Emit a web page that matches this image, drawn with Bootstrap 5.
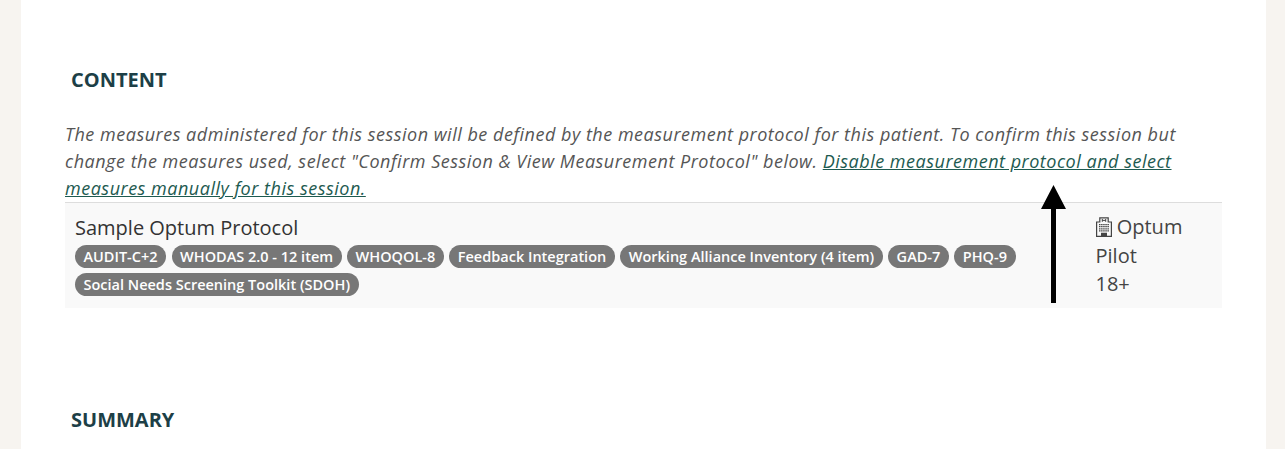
<!DOCTYPE html>
<html lang="en"><head><meta charset="utf-8">
<link href="https://cdn.jsdelivr.net/npm/bootstrap@5.3.0/dist/css/bootstrap.min.css" rel="stylesheet">
<style>
html,body{height:449px;overflow:hidden}
body{background:#f7f4f0;font-family:"Open Sans",sans-serif;color:#333}
.sheet{margin:0 19px 0 21px;height:449px;background:#fff;padding:69px 44px 0 44px;position:relative}
.sect{font-size:20px;font-weight:700;color:#1d3f47;line-height:22px;margin:0 0 0 6px}
.intro{font-size:18px;font-style:italic;line-height:27px;color:#555;margin:30px 0 0;width:1125px;letter-spacing:.51px}
.intro a{color:#1d5a50}
.proto{background:#f9f9f9;border-top:1px solid #ddd;height:105.5px;margin-top:0}
.pmain{width:1031px;padding:10px 0 0 10px}
.pname{font-size:20px;line-height:30px;color:#333}
.chips{gap:5px 5.5px;margin-top:2px;width:990px}
.chip{background:#777;color:#fff;font-size:14.5px;font-weight:600;line-height:19px;height:23px;padding:2px 8.5px;border-radius:12px;white-space:nowrap}
.pside{font-size:20px;line-height:28.5px;padding-top:10px;color:#444;margin-left:-.5px}
.pside svg{vertical-align:-3px}
.sect2{margin-top:101.5px}
.arrow{position:absolute;left:1020px;top:185px}
</style></head><body>
<div class="sheet">
<h2 class="sect">CONTENT</h2>
<p class="intro">The measures administered for this session will be defined by the measurement protocol for this patient. To confirm this session but change the measures used, select "Confirm Session &amp; View Measurement Protocol" below. <a href="#">Disable measurement protocol and select measures manually for this session.</a></p>
<div class="proto d-flex">
<div class="pmain">
<div class="pname">Sample Optum Protocol</div>
<div class="chips d-flex flex-wrap">
<span class="chip">AUDIT-C+2</span><span class="chip">WHODAS 2.0 - 12 item</span><span class="chip">WHOQOL-8</span><span class="chip">Feedback Integration</span><span class="chip">Working Alliance Inventory (4 item)</span><span class="chip">GAD-7</span><span class="chip">PHQ-9</span><span class="chip">Social Needs Screening Toolkit (SDOH)</span>
</div></div>
<div class="pside">
<div><svg width="16" height="20" viewBox="0 0 16 20" fill="none" stroke="#444" stroke-width="1.2"><path d="M.6 19.4V5h3.2V.8h8.4V5h3.2v14.4z"/><path d="M6.3 2v2.8M9.7 2v2.8M6.3 3.4h3.4" stroke-width="1"/><path d="M3 7.6h10M3 9.7h10M3 11.8h10M3 13.9h10" stroke-width="1.3" stroke-dasharray="1.5 .6"/><path d="M5.6 19.4v-3h4.8v3z" fill="#444"/></svg> Optum</div>
<div>Pilot</div>
<div>18+</div>
</div>
</div>
<h2 class="sect sect2">SUMMARY</h2>
<svg class="arrow" width="25" height="118" viewBox="0 0 25 118"><path d="M12.5 0 25 24H15V118H10V24H0z" fill="#000"/></svg>
</div>
</body></html>
